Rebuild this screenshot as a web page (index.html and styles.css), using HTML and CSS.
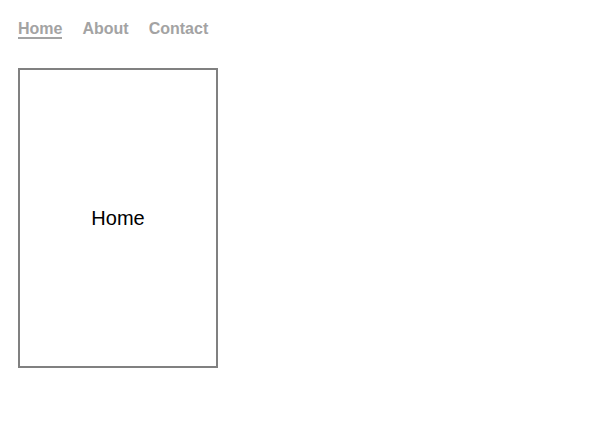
FILE: index.html
```html
<!DOCTYPE html>
<html>
<head>
<meta charset="utf-8">
<link rel="stylesheet" href="styles.css">
</head>
<body>
<nav class="nav">
  <a class="nav-link active" href="#">Home</a>
  <a class="nav-link" href="#">About</a>
  <a class="nav-link" href="#">Contact</a>
</nav>
<main class="panel">Home</main>
</body>
</html>
```
FILE: styles.css
```css
html, body {
  margin: 0;
  padding: 0;
  background: #fff;
}
body {
  padding: 19px 18px;
  font-family: "Liberation Sans", Arial, sans-serif;
}
.nav {
  display: flex;
  gap: 20px;
  height: 20px;
}
.nav-link {
  font-size: 16px;
  font-weight: bold;
  line-height: 17px;
  padding-top: 1px;
  color: #a3a3a3;
  text-decoration: none;
  border-bottom: 2px solid transparent;
}
.nav-link.active {
  border-bottom-color: #a3a3a3;
}
.panel {
  margin-top: 29px;
  width: 196px;
  height: 296px;
  border: 2px solid #808080;
  display: flex;
  align-items: center;
  justify-content: center;
  font-size: 20px;
  color: #000;
}
```
